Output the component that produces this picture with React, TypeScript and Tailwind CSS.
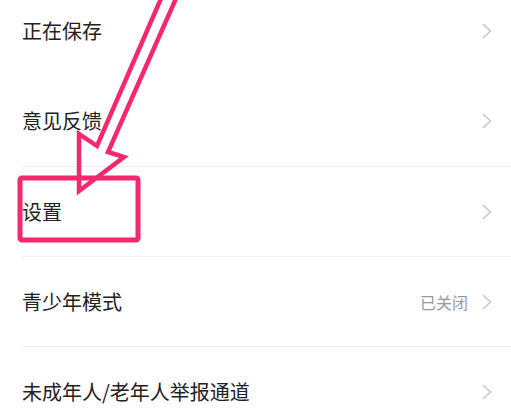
import React from "react";

type Item = { label: string; value?: string; divider?: boolean };

const items: Item[] = [
  { label: "正在保存" },
  { label: "意见反馈" },
  { label: "设置", divider: true },
  { label: "青少年模式", value: "已关闭", divider: true },
  { label: "未成年人/老年人举报通道", divider: true },
];

const Chevron: React.FC = () => (
  <svg width="10" height="16" viewBox="0 0 10 16" fill="none">
    <polyline
      points="1.5,1.5 8.5,8 1.5,14.5"
      stroke="#c6c6c6"
      strokeWidth="1.6"
      strokeLinecap="round"
      strokeLinejoin="round"
    />
  </svg>
);

const App: React.FC = () => {
  return (
    <div
      className="relative w-[511px] h-[416px] overflow-hidden bg-white"
      style={{ fontFamily: '"Noto Sans CJK SC", "Noto Sans", sans-serif' }}
    >
      {/* Menu rows */}
      <div className="flex flex-col -mt-[14px]">
        {items.map((item) => (
          <div key={item.label} className="pl-[22px]">
            <div
              className={
                "flex items-center justify-between h-[90px] pr-[19px] " +
                (item.divider ? "border-t border-[#efefef]" : "")
              }
            >
              <span className="text-[20px] leading-none text-[#222222]">
                {item.label}
              </span>
              <div className="flex items-center gap-[14px]">
                {item.value && (
                  <span className="text-[16px] leading-none text-[#9a9a9a]">
                    {item.value}
                  </span>
                )}
                <Chevron />
              </div>
            </div>
          </div>
        ))}
      </div>

      {/* Annotation overlay */}
      <svg
        className="absolute inset-0 pointer-events-none"
        width="511"
        height="416"
        viewBox="0 0 511 416"
        fill="none"
      >
        <polygon
          points="163,-6 97,146 79,134 79,191 124,157 108,152 178,-6"
          stroke="#f5286d"
          strokeWidth="4.5"
          strokeLinejoin="miter"
        />
        <rect
          x="20"
          y="178"
          width="118"
          height="62"
          rx="2"
          stroke="#f5286d"
          strokeWidth="5"
        />
      </svg>
    </div>
  );
};

export default App;
